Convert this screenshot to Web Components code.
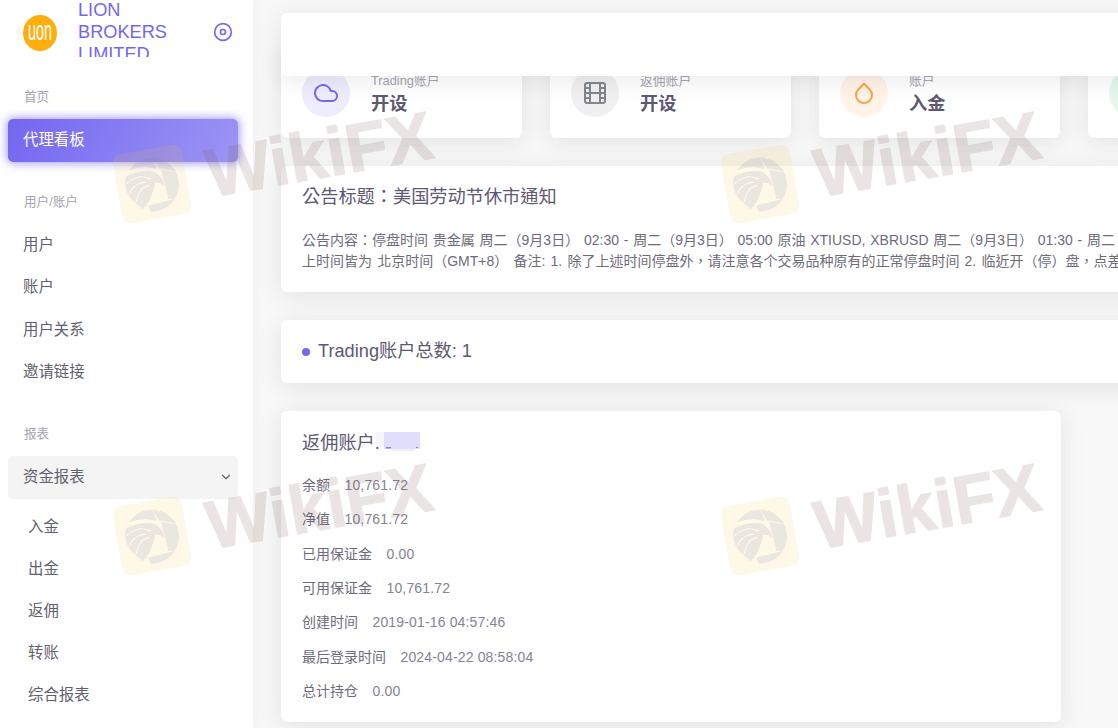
<!DOCTYPE html>
<html lang="zh-CN">
<head>
<meta charset="utf-8">
<title>代理看板</title>
<style>
  html, body { margin: 0; height: 728px; overflow: hidden; }
  body {
    background: #f8f8f8;
    font-family: "Liberation Sans", "Noto Sans CJK SC", sans-serif;
    font-size: 14px;
    color: #6e6b7b;
  }
</style>
</head>
<body>
<app-shell>
  <side-bar slot="side">
    <nav-label>首页</nav-label>
    <nav-item active>代理看板</nav-item>
    <nav-label>用户/账户</nav-label>
    <nav-item>用户</nav-item>
    <nav-item>账户</nav-item>
    <nav-item>用户关系</nav-item>
    <nav-item>邀请链接</nav-item>
    <nav-label>报表</nav-label>
    <nav-group label="资金报表">
      <nav-item sub>入金</nav-item>
      <nav-item sub>出金</nav-item>
      <nav-item sub>返佣</nav-item>
      <nav-item sub>转账</nav-item>
      <nav-item sub>综合报表</nav-item>
    </nav-group>
  </side-bar>

  <stat-row>
    <stat-card icon="cloud" tone="purple" label="Trading账户">开设</stat-card>
    <stat-card icon="film" tone="gray" label="返佣账户">开设</stat-card>
    <stat-card icon="droplet" tone="orange" label="账户">入金</stat-card>
    <stat-card icon="dollar" tone="green" label=""></stat-card>
  </stat-row>

  <notice-card lang="zh-Hant" title-text="公告标题：美国劳动节休市通知">
    <span class="l1">公告内容：停盘时间 贵金属 周二（9月3日） 02:30 - 周二（9月3日） 05:00 原油 XTIUSD, XBRUSD 周二（9月3日） 01:30 - 周二</span><br>
    <span class="l2">上时间皆为 北京时间（GMT+8） 备注: 1. 除了上述时间停盘外，请注意各个交易品种原有的正常停盘时间 2. 临近开（停）盘，点差</span>
  </notice-card>

  <count-card>Trading账户总数: 1</count-card>

  <account-card title-text="返佣账户.">
    <info-row label="余额">10,761.72</info-row>
    <info-row label="净值">10,761.72</info-row>
    <info-row label="已用保证金">0.00</info-row>
    <info-row label="可用保证金">10,761.72</info-row>
    <info-row label="创建时间">2019-01-16 04:57:46</info-row>
    <info-row label="最后登录时间">2024-04-22 08:58:04</info-row>
    <info-row label="总计持仓">0.00</info-row>
  </account-card>
</app-shell>

<script>
const ICONS = {
  cloud: '<path d="M18 10h-1.26A8 8 0 1 0 9 20h9a5 5 0 0 0 0-10z"/>',
  film: '<rect x="2" y="2" width="20" height="20" rx="2.18"/><path d="M7 2v20M17 2v20M2 12h20M2 7h5M2 17h5M17 17h5M17 7h5"/>',
  droplet: '<path d="M12 2.69l5.66 5.66a8 8 0 1 1-11.31 0z"/>',
  dollar: '<path d="M12 1v22M17 5H9.5a3.5 3.5 0 0 0 0 7h5a3.5 3.5 0 0 1 0 7H6"/>'
};

class AppShell extends HTMLElement {
  constructor() {
    super();
    this.attachShadow({ mode: 'open' });
    this.shadowRoot.innerHTML = `
      <style>
        :host { display: flex; width: 1118px; height: 728px; overflow: hidden; position: relative; }
        main {
          flex: none;
          width: 865px;
          box-sizing: border-box;
          padding: 48px 0 0 28px;
          display: flex;
          flex-direction: column;
          gap: 28px;
          position: relative;
          overflow: hidden;
        }
        .topbar {
          position: absolute;
          top: 13px;
          left: 28px;
          width: 1048px;
          height: 63px;
          background: #fff;
          border-radius: 6px;
          box-shadow: 0 4px 24px rgba(34, 41, 47, .1);
        }
      </style>
      <slot name="side"></slot>
      <main>
        <slot></slot>
        <div class="topbar"></div>
      </main>
      <water-mark style="left:112px;top:143px"></water-mark>
      <water-mark style="left:720px;top:143px"></water-mark>
      <water-mark style="left:112px;top:495px"></water-mark>
      <water-mark style="left:720px;top:495px"></water-mark>
    `;
  }
}

class SideBar extends HTMLElement {
  constructor() {
    super();
    this.attachShadow({ mode: 'open' });
    this.shadowRoot.innerHTML = `
      <style>
        :host {
          display: block;
          flex: none;
          width: 253px;
          height: 728px;
          background: #fff;
          box-shadow: 0 0 15px rgba(34, 41, 47, .05);
          position: relative;
          z-index: 1;
          overflow: hidden;
        }
        header {
          display: flex;
          height: 57px;
          overflow: hidden;
          box-sizing: border-box;
          padding-left: 23px;
        }
        .logo { flex: none; width: 34px; height: 36px; margin-top: 15px; }
        .brand {
          flex: none;
          width: 92px;
          margin: -1px 0 0 21px;
          font-size: 18.2px;
          line-height: 22px;
          color: #7367f0;
        }
        .toggle {
          flex: none;
          width: 20px;
          height: 20px;
          margin: 22px 0 0 43px;
          fill: none;
          stroke: #7367f0;
          stroke-width: 2;
        }
        nav { padding: 0 15px 0 8px; }
      </style>
      <header>
        <svg class="logo" viewBox="0 0 34 36">
          <ellipse cx="17" cy="18" rx="17" ry="18" fill="#ffae0f"/>
          <text x="17" y="25" text-anchor="middle" textLength="24" lengthAdjust="spacingAndGlyphs"
            font-family="Liberation Sans, sans-serif" font-size="28" fill="#fff">uon</text>
        </svg>
        <div class="brand">LION BROKERS LIMITED</div>
        <svg class="toggle" viewBox="0 0 24 24"><circle cx="12" cy="12" r="10"/><circle cx="12" cy="12" r="3"/></svg>
      </header>
      <nav><slot></slot></nav>
    `;
  }
}

class NavLabel extends HTMLElement {
  constructor() {
    super();
    this.attachShadow({ mode: 'open' });
    this.shadowRoot.innerHTML = `
      <style>
        :host {
          display: block;
          height: 20px;
          margin: 30px 0 12px;
          padding-left: 16px;
          font-size: 12.6px;
          line-height: 20px;
          color: #a6a4b0;
        }
      </style>
      <slot></slot>
    `;
  }
}

class NavItem extends HTMLElement {
  constructor() {
    super();
    this.attachShadow({ mode: 'open' });
    this.shadowRoot.innerHTML = `
      <style>
        :host {
          display: block;
          height: 42.4px;
          padding-left: 15px;
          border-radius: 5px;
          font-size: 15.4px;
          line-height: 41.4px;
          color: #625f6e;
        }
        :host([sub]) { height: 42px; line-height: 41.4px; padding-left: 20px; }
        :host([active]) {
          height: 43px;
          line-height: 41px;
          color: #fff;
          background: linear-gradient(118deg, #7367f0, rgba(115, 103, 240, .7));
          box-shadow: 0 0 10px 1px rgba(115, 103, 240, .7);
        }
      </style>
      <slot></slot>
    `;
  }
}

class NavGroup extends HTMLElement {
  constructor() {
    super();
    this.attachShadow({ mode: 'open' });
    this.shadowRoot.innerHTML = `
      <style>
        :host { display: block; }
        .head {
          display: flex;
          align-items: center;
          justify-content: space-between;
          height: 43px;
          box-sizing: border-box;
          padding: 0 5px 1px 15px;
          border-radius: 5px;
          background: #f4f4f5;
          font-size: 15.4px;
          line-height: 20px;
          color: #625f6e;
        }
        svg { width: 14px; height: 14px; fill: none; stroke: #625f6e; stroke-width: 2; stroke-linecap: round; stroke-linejoin: round; }
        .list { padding-top: 7px; }
      </style>
      <div class="head"><span></span><svg viewBox="0 0 24 24"><path d="M6 9l6 6 6-6"/></svg></div>
      <div class="list"><slot></slot></div>
    `;
    this.shadowRoot.querySelector('span').textContent = this.getAttribute('label');
  }
}

class StatRow extends HTMLElement {
  constructor() {
    super();
    this.attachShadow({ mode: 'open' });
    this.shadowRoot.innerHTML = `
      <style>
        :host { display: grid; grid-template-columns: repeat(4, 241px); gap: 28px; }
      </style>
      <slot></slot>
    `;
  }
}

class StatCard extends HTMLElement {
  constructor() {
    super();
    this.attachShadow({ mode: 'open' });
    const tones = {
      purple: ['rgba(115,103,240,.12)', '#7367f0'],
      gray: ['rgba(130,134,139,.12)', '#82868b'],
      orange: ['rgba(255,159,67,.12)', '#ff9f43'],
      green: ['rgba(40,199,111,.12)', '#28c76f']
    };
    const [bg, fg] = tones[this.getAttribute('tone')];
    this.shadowRoot.innerHTML = `
      <style>
        :host {
          display: flex;
          align-items: center;
          gap: 21px;
          height: 90px;
          box-sizing: border-box;
          padding: 0 21px;
          background: #fff;
          border-radius: 6px;
          box-shadow: 0 4px 24px rgba(34, 41, 47, .1);
        }
        .dot { flex: none; display: grid; place-items: center; width: 48px; height: 48px; border-radius: 50%; background: ${bg}; }
        svg { width: 24px; height: 24px; fill: none; stroke: ${fg}; stroke-width: 2; stroke-linecap: round; stroke-linejoin: round; }
        .label { font-size: 12.8px; line-height: 20px; color: #a6a4b0; }
        .value { margin-top: 2px; font-size: 18.2px; line-height: 23px; font-weight: 700; color: #5e5873; }
      </style>
      <div class="dot"><svg viewBox="0 0 24 24">${ICONS[this.getAttribute('icon')]}</svg></div>
      <div>
        <div class="label">${this.getAttribute('label')}</div>
        <div class="value"><slot></slot></div>
      </div>
    `;
  }
}

class NoticeCard extends HTMLElement {
  constructor() {
    super();
    this.attachShadow({ mode: 'open' });
    this.shadowRoot.innerHTML = `
      <style>
        :host {
          display: block;
          width: 1048px;
          box-sizing: border-box;
          padding: 21px;
          background: #fff;
          border-radius: 6px;
          box-shadow: 0 4px 24px rgba(34, 41, 47, .1);
          white-space: nowrap;
          font-family: "Liberation Sans", "Noto Sans CJK TC", sans-serif;
        }
        h4 { margin: 0 0 22px; font-size: 18.2px; line-height: 21px; font-weight: 400; color: #5e5873; }
        div { font-size: 14px; line-height: 20.5px; color: #6e6b7b; }
        ::slotted(.l1) { word-spacing: .9px; }
        ::slotted(.l2) { word-spacing: 1.3px; }
      </style>
      <h4>${this.getAttribute('title-text')}</h4>
      <div><slot></slot></div>
    `;
  }
}

class CountCard extends HTMLElement {
  constructor() {
    super();
    this.attachShadow({ mode: 'open' });
    this.shadowRoot.innerHTML = `
      <style>
        :host {
          display: flex;
          align-items: center;
          gap: 8px;
          width: 1048px;
          height: 63px;
          box-sizing: border-box;
          padding: 0 21px;
          background: #fff;
          border-radius: 6px;
          box-shadow: 0 4px 24px rgba(34, 41, 47, .1);
          font-size: 18.2px;
          line-height: 21px;
          color: #5e5873;
        }
        i { width: 8px; height: 8px; border-radius: 50%; background: #7367f0; }
      </style>
      <i></i><span><slot></slot></span>
    `;
  }
}

class AccountCard extends HTMLElement {
  constructor() {
    super();
    this.attachShadow({ mode: 'open' });
    this.shadowRoot.innerHTML = `
      <style>
        :host {
          display: block;
          width: 780px;
          height: 311px;
          box-sizing: border-box;
          padding: 21px;
          background: #fff;
          border-radius: 6px;
          box-shadow: 0 4px 24px rgba(34, 41, 47, .1);
        }
        h4 {
          display: flex;
          margin: 0 0 21px;
          height: 22px;
          font-size: 18.2px;
          line-height: 22px;
          font-weight: 400;
          color: #5e5873;
        }
        /* the blurred account number */
        .mask {
          width: 44px;
          height: 19px;
          margin-left: -4px;
          background:
            linear-gradient(#8d83f3, #8d83f3) 10px 15px / 5px 1.5px no-repeat,
            linear-gradient(#8d83f3, #8d83f3) 40px 15px / 2px 1px no-repeat,
            linear-gradient(#e1defb, #e1defb) 8px 0 / 36px 17px no-repeat,
            linear-gradient(#f0eefd, #f0eefd) 15px 17px / 24px 2px no-repeat,
            linear-gradient(#f6f6f8, #f6f6f8) 0 0 / 8px 15px no-repeat;
        }
      </style>
      <h4><span>${this.getAttribute('title-text')}</span><span class="mask"></span></h4>
      <slot></slot>
    `;
  }
}

class InfoRow extends HTMLElement {
  constructor() {
    super();
    this.attachShadow({ mode: 'open' });
    this.shadowRoot.innerHTML = `
      <style>
        :host {
          display: flex;
          gap: 14.5px;
          height: 20px;
          margin-bottom: 14.33px;
          font-size: 14px;
          line-height: 20px;
          color: #6e6b7b;
        }
        .val { color: #858391; letter-spacing: .15px; }
      </style>
      <span>${this.getAttribute('label')}</span>
      <span class="val"><slot></slot></span>
    `;
  }
}

// WikiFX stamp that sits on top of the whole page
class WaterMark extends HTMLElement {
  constructor() {
    super();
    this.attachShadow({ mode: 'open' });
    this.shadowRoot.innerHTML = `
      <style>
        :host {
          position: absolute;
          width: 340px;
          height: 90px;
          pointer-events: none;
          z-index: 5;
        }
        svg { display: block; overflow: visible; }
      </style>
      <svg width="340" height="90" viewBox="0 0 340 90">
        <defs>
          <mask id="cut" maskUnits="userSpaceOnUse" x="0" y="0" width="255" height="255">
            <rect width="255" height="255" fill="#000"/>
            <circle cx="120" cy="125" r="81" fill="#fff"/>
            <!-- gaps between the aperture blades -->
            <path d="M120 38 L140 76 L186 84 L166 168 L196 166 L110 188 L116 210 L60 210 L30 100 L40 88 C70 70 105 70 135 78 Z" fill="#000"/>
            <path d="M148 80 L190 88 L168 160 Z" fill="#fff"/>
            <!-- eagle -->
            <path d="M42 100 C70 85 110 78 130 90 C148 100 158 115 155 130 C150 120 140 118 128 120 C130 132 120 150 115 165 C110 180 100 192 92 198 C75 185 52 165 42 140 C39 125 39 110 42 100 Z" fill="#fff"/>
            <g fill="none" stroke="#000" stroke-width="3.5" stroke-linecap="round">
              <path d="M45 122 C60 105 80 100 92 102"/>
              <path d="M54 150 C62 126 85 118 100 118"/>
              <path d="M74 176 C76 150 90 132 112 128"/>
              <path d="M98 103 L116 107"/>
            </g>
          </mask>
        </defs>
        <rect x="5" y="6" width="70" height="70" rx="8" transform="rotate(-10 40 41)" fill="rgba(250,200,70,.13)"/>
        <g transform="scale(.3333)">
          <rect width="255" height="255" fill="rgba(120,125,190,.15)" mask="url(#cut)"/>
        </g>
        <g transform="rotate(-10 35 36)" opacity=".15">
          <text x="95" y="65" textLength="228" lengthAdjust="spacing"
            font-family="Liberation Sans, sans-serif" font-weight="700" font-size="68"
            fill="#78584e" stroke="#78584e" stroke-width="1.5" stroke-linejoin="round">WikiFX</text>
        </g>
      </svg>
    `;
  }
}

customElements.define('water-mark', WaterMark);
customElements.define('nav-label', NavLabel);
customElements.define('nav-item', NavItem);
customElements.define('nav-group', NavGroup);
customElements.define('side-bar', SideBar);
customElements.define('stat-card', StatCard);
customElements.define('stat-row', StatRow);
customElements.define('notice-card', NoticeCard);
customElements.define('count-card', CountCard);
customElements.define('info-row', InfoRow);
customElements.define('account-card', AccountCard);
customElements.define('app-shell', AppShell);
</script>
</body>
</html>
